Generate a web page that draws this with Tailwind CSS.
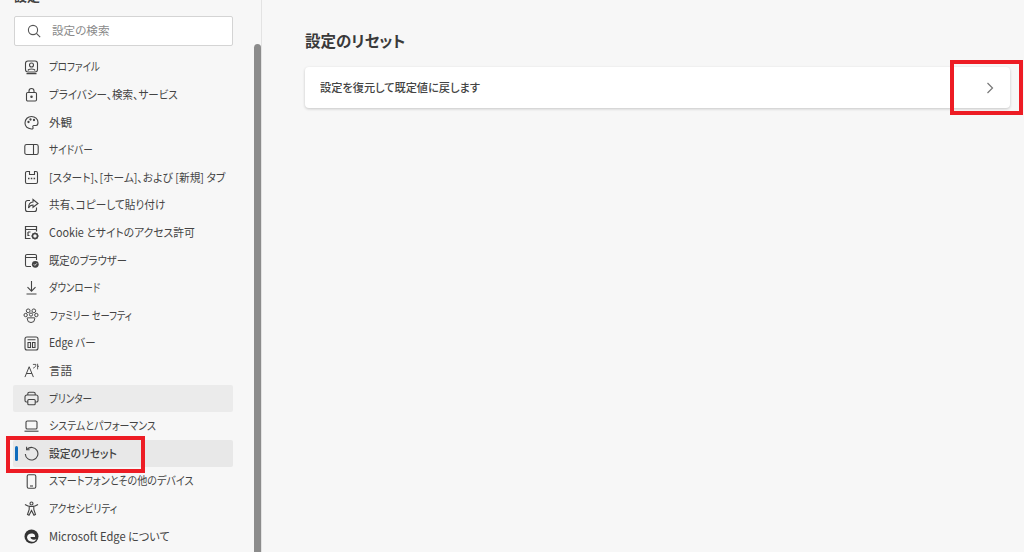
<!DOCTYPE html>
<html lang="ja">
<head>
    <meta charset="UTF-8">
    <title>設定のリセット</title>
    <script src="https://cdn.jsdelivr.net/npm/@tailwindcss/browser@4"></script>
</head>
<body class="bg-[#f7f7f7] overflow-hidden font-['Noto_Sans_CJK_JP','Noto_Sans',sans-serif] [font-feature-settings:'palt'] text-[#444]">
<div class="flex h-[552px] w-[1024px]">
    <!-- sidebar -->
    <div class="relative w-[262px] h-full shrink-0 border-r border-[#e3e3e3] overflow-hidden">
        <div class="absolute left-[254px] top-[44px] bottom-0 w-[7px] rounded-t-[4px] bg-[#8c8c8c]"></div>
        <div class="absolute left-[14px] top-[-12px] text-[13px] font-semibold leading-[16px]">設定</div>

        <div class="ml-[14px] mt-[16px] w-[219px] h-[30px] flex items-center bg-white border border-[#d4d4d4] rounded-[2px]">
            <svg class="ml-[12px] w-[14px] h-[14px]" viewBox="0 0 14 14" fill="none" stroke="#555" stroke-width="1.1"><circle cx="6" cy="6" r="4.6"/><path d="M9.4 9.4 13.2 13.2"/></svg>
            <span class="ml-[11px] text-[11.6px] text-[#8a8a8a]">設定の検索</span>
        </div>

        <nav class="mt-[7.4px] ml-[13px] w-[220px] text-[11.6px] whitespace-nowrap">
            <div class="h-[27.6px] flex items-center">
                <svg class="ml-[11px] w-[15px] h-[15px] shrink-0" viewBox="0 0 15 15" fill="none" stroke="#444" stroke-width="1.1"><rect x="1.5" y="1" width="12" height="11" rx="2.5"/><circle cx="7.5" cy="5" r="2"/><path d="M4 10.5c.5-2 6.5-2 7 0M2.500 13.600h10"/></svg>
                <span class="ml-[10px] inline-block origin-left scale-x-[.82]">プロファイル</span>
            </div>
            <div class="h-[27.6px] flex items-center">
                <svg class="ml-[11px] w-[15px] h-[15px] shrink-0" viewBox="0 0 15 15" fill="none" stroke="#444" stroke-width="1.1"><rect x="2.5" y="5.5" width="10" height="8.5" rx="1.2"/><path d="M5 5.5V4a2.500 2.500 0 0 1 5 0v1.500"/><circle cx="7.500" cy="9.800" r=".7" fill="#444"/></svg>
                <span class="ml-[10px] inline-block origin-left scale-x-[.908]">プライバシー、検索、サービス</span>
            </div>
            <div class="h-[27.6px] flex items-center">
                <svg class="ml-[11px] w-[15px] h-[15px] shrink-0" viewBox="0 0 15 15" fill="none" stroke="#444" stroke-width="1.1"><path d="M1 8C1 4 4 1.500 7.500 1.500S14 4 14 7.500c0 2-1 3-2 3H10c-1.200 0-1.500 1-1 2 .4 1-.3 1.800-1.500 1.500C4 13.500 1 11.500 1 8Z"/><circle cx="4.500" cy="7" r=".6" fill="#444"/><circle cx="6.500" cy="4.500" r=".6" fill="#444"/><circle cx="10" cy="5" r=".6" fill="#444"/></svg>
                <span class="ml-[10px]">外観</span>
            </div>
            <div class="h-[27.6px] flex items-center">
                <svg class="ml-[11px] w-[15px] h-[15px] shrink-0" viewBox="0 0 15 15" fill="none" stroke="#444" stroke-width="1.1"><rect x=".8" y="2.500" width="13.400" height="10" rx="1.800"/><path d="M9.500 2.500v10"/></svg>
                <span class="ml-[10px] inline-block origin-left scale-x-[.83]">サイドバー</span>
            </div>
            <div class="h-[27.6px] flex items-center">
                <svg class="ml-[11px] w-[15px] h-[15px] shrink-0" viewBox="0 0 15 15" fill="none" stroke="#444" stroke-width="1.1"><path d="M5.500 1.500H3a1.500 1.500 0 0 0-1.500 1.500v9A1.500 1.500 0 0 0 3 13.500h9a1.500 1.500 0 0 0 1.500-1.500V3A1.500 1.500 0 0 0 12 1.500h-1.500M5.500 1v3.500h5V1"/><path d="M4 8.500h1.500M6.800 8.500h1.500M9.600 8.500h1.500" stroke-width="1.300"/></svg>
                <span class="ml-[10px] inline-block origin-left scale-x-[.926]">[スタート]、[ホーム]、および [新規] タブ</span>
            </div>
            <div class="h-[27.6px] flex items-center">
                <svg class="ml-[11px] w-[15px] h-[15px] shrink-0" viewBox="0 0 15 15" fill="none" stroke="#444" stroke-width="1.1"><path d="M6 2.500H3.500a2 2 0 0 0-2 2v7a2 2 0 0 0 2 2h7a2 2 0 0 0 2-2V9.500"/><path d="M9 1.500 14 5.500 9 9.300V7C7 7 5.500 8 4.500 10 4.500 7 6 4.200 9 4Z"/></svg>
                <span class="ml-[10px] inline-block origin-left scale-x-[.92]">共有、コピーして貼り付け</span>
            </div>
            <div class="h-[27.6px] flex items-center">
                <svg class="ml-[11px] w-[15px] h-[15px] shrink-0" viewBox="0 0 15 15" fill="none" stroke="#444" stroke-width="1.2"><path d="M6.500 13.500H1.500v-12h11V6.500M1.500 4.500h11M4 7h2.500M4 7v3.500h1.500"/><circle cx="11" cy="11" r="2.500" fill="none" stroke-width="1.500"/><path d="M11 7.500v1.200M11 13.300v1.200M7.500 11h1.200M13.300 11h1.200M8.600 8.600l.8.800M12.600 12.600l.8.800M8.600 13.400l.8-.8M12.600 9.400l.8-.8" stroke-width="1.300"/></svg>
                <span class="ml-[10px] inline-block origin-left scale-x-[.93]">Cookie とサイトのアクセス許可</span>
            </div>
            <div class="h-[27.6px] flex items-center">
                <svg class="ml-[11px] w-[15px] h-[15px] shrink-0" viewBox="0 0 15 15" fill="none" stroke="#444" stroke-width="1.1"><path d="M7 13.500H3a1.500 1.500 0 0 1-1.500-1.500V3A1.500 1.500 0 0 1 3 1.500h8A1.500 1.500 0 0 1 12.500 3v4M1.500 4.500h11"/><circle cx="11.300" cy="11.300" r="3.400" fill="#444" stroke="none"/><path d="M9.800 11.300l1.100 1.100 1.900-2" stroke="#f7f7f7" stroke-width=".9"/></svg>
                <span class="ml-[10px] inline-block origin-left scale-x-[.89]">既定のブラウザー</span>
            </div>
            <div class="h-[27.6px] flex items-center">
                <svg class="ml-[11px] w-[15px] h-[15px] shrink-0" viewBox="0 0 15 15" fill="none" stroke="#444" stroke-width="1.1"><path d="M7.500 1v10M3.500 7.200l4 4 4-4M2.500 14h10"/></svg>
                <span class="ml-[10px] inline-block origin-left scale-x-[.81]">ダウンロード</span>
            </div>
            <div class="h-[27.6px] flex items-center">
                <svg class="ml-[10px] w-[16px] h-[15px] shrink-0" viewBox="0 0 17 16" fill="none" stroke="#444" stroke-width="1.050"><circle cx="5.500" cy="3" r="2"/><circle cx="11.500" cy="3" r="2"/><circle cx="2.800" cy="7.500" r="1.800"/><circle cx="14.200" cy="7.500" r="1.800"/><circle cx="8.500" cy="7" r="1.700"/><path d="M4.500 10.500h8v1a4 4 0 0 1-8 0Z"/></svg>
                <span class="ml-[11px] inline-block origin-left scale-x-[.8]">ファミリー セーフティ</span>
            </div>
            <div class="h-[27.6px] flex items-center">
                <svg class="ml-[11px] w-[15px] h-[15px] shrink-0" viewBox="0 0 15 15" fill="none" stroke="#444" stroke-width="1.1"><rect x="1" y="1" width="13" height="13" rx="2"/><path d="M3.500 3.800h8M4 6.500h2.500v5H4ZM8.500 6.500H11v5H8.500Z"/></svg>
                <span class="ml-[10px] inline-block origin-left scale-x-[.9]">Edge バー</span>
            </div>
            <div class="h-[27.6px] flex items-center">
                <svg class="ml-[11px] w-[15px] h-[15px] shrink-0" viewBox="0 0 16 16" fill="none" stroke="#444" stroke-width="1.050"><path d="M1 15 5.500 4 10 15M2.600 11.200h5.800"/><path d="M9.500 1.500h3.200c0 2-1 3.400-3 4M14.500.8v6M14.500 3.500H16" stroke-width=".9"/></svg>
                <span class="ml-[10px]">言語</span>
            </div>
            <div class="h-[27.6px] flex items-center bg-[#ebebeb] rounded-[2px]">
                <svg class="ml-[11px] w-[15px] h-[15px] shrink-0" viewBox="0 0 15 15" fill="none" stroke="#444" stroke-width="1.1"><path d="M3.800 4V2.800a1.500 1.500 0 0 1 1.500-1.500h4.400a1.500 1.500 0 0 1 1.500 1.500V4M3.800 11H2.500A1.500 1.500 0 0 1 1 9.500V5.800A1.800 1.800 0 0 1 2.800 4h9.400A1.800 1.800 0 0 1 14 5.800v3.700a1.500 1.500 0 0 1-1.500 1.500h-1.300"/><rect x="3.800" y="8.500" width="7.400" height="5.200" rx="1"/></svg>
                <span class="ml-[10px] inline-block origin-left scale-x-[.83]">プリンター</span>
            </div>
            <div class="h-[27.6px] flex items-center">
                <svg class="ml-[11px] w-[15px] h-[15px] shrink-0" viewBox="0 0 15 15" fill="none" stroke="#444" stroke-width="1.1"><rect x="2" y="3" width="11" height="8" rx="1.300"/><path d="M.5 13.200h14"/></svg>
                <span class="ml-[10px] inline-block origin-left scale-x-[.86]">システムとパフォーマンス</span>
            </div>
            <div class="h-[27.6px] flex items-center bg-[#e8e8e8] rounded-[2px] relative">
                <div class="absolute left-[2px] top-[6px] bottom-[6px] w-[3px] rounded-full bg-[#0f6cbd]"></div>
                <svg class="ml-[11px] w-[15px] h-[15px] shrink-0" viewBox="0 0 15 15" fill="none" stroke="#444" stroke-width="1.1"><path d="M3 3.400A6.300 6.300 0 1 1 1.300 8"/><path d="M2.600 .8v3h3"/></svg>
                <span class="ml-[10px] font-medium inline-block origin-left scale-x-[.93]">設定のリセット</span>
            </div>
            <div class="h-[27.6px] flex items-center">
                <svg class="ml-[11px] w-[15px] h-[15px] shrink-0" viewBox="0 0 15 15" fill="none" stroke="#444" stroke-width="1.1"><rect x="3.200" y=".8" width="8.600" height="13.400" rx="1.500"/><path d="M6 12h3"/></svg>
                <span class="ml-[10px] inline-block origin-left scale-x-[.87]">スマートフォンとその他のデバイス</span>
            </div>
            <div class="h-[27.6px] flex items-center">
                <svg class="ml-[11px] w-[15px] h-[15px] shrink-0" viewBox="0 0 15 15" fill="none" stroke="#444" stroke-width="1.1"><circle cx="7.500" cy="2.500" r="1.500"/><path d="M1 3.500c2 1.500 3.500 2 6.500 2s4.500-.5 6.500-2M5.200 5.500v3L3.500 13.500l1.500.7 2.500-4.700 2.500 4.700 1.500-.7-1.700-5v-3"/></svg>
                <span class="ml-[10px] inline-block origin-left scale-x-[.84]">アクセシビリティ</span>
            </div>
            <div class="h-[27.6px] flex items-center">
                <svg class="ml-[11px] w-[15px] h-[15px] shrink-0" viewBox="0 0 15 15"><circle cx="7.500" cy="7.500" r="7" fill="#333"/><path d="M3 8.500C3 5.500 6 4 8.500 4.500c2 .4 3 2 2.500 3.500H6.500c0 2.500 3.500 3.500 6 2-1 2.200-3 3-4.500 2.800C5 12.500 3.500 11 3 8.500Z" fill="#f7f7f7"/></svg>
                <span class="ml-[10px] inline-block origin-left scale-x-[.96]">Microsoft Edge について</span>
            </div>
        </nav>

        <!-- annotation -->
        <div class="absolute left-[6px] top-[436px] w-[139px] h-[37px] border-[4px] border-[#ed1c24]"></div>
    </div>

    <!-- main -->
    <div class="relative flex-1 pl-[43px] pt-[28px]">
        <h1 class="text-[15.5px] leading-[24px] font-semibold text-[#3a3a3a]">設定のリセット</h1>
        <div class="mt-[15px] w-[705px] h-[41px] flex items-center justify-between bg-white rounded-[4px] shadow-[0_1px_3px_rgba(0,0,0,0.2)]">
            <span class="ml-[14.500px] text-[11.6px] font-medium inline-block origin-left scale-x-[.965]">設定を復元して既定値に戻します</span>
            <svg class="mr-[15px] w-[10px] h-[12px]" viewBox="0 0 10 12" fill="none" stroke="#777" stroke-width="1.2"><path d="M2.500 1 7.500 6 2.500 11"/></svg>
        </div>
        <div class="absolute left-[688px] top-[60px] w-[73px] h-[55px] border-[4px] border-[#ed1c24]"></div>
    </div>
</div>
</body>
</html>
